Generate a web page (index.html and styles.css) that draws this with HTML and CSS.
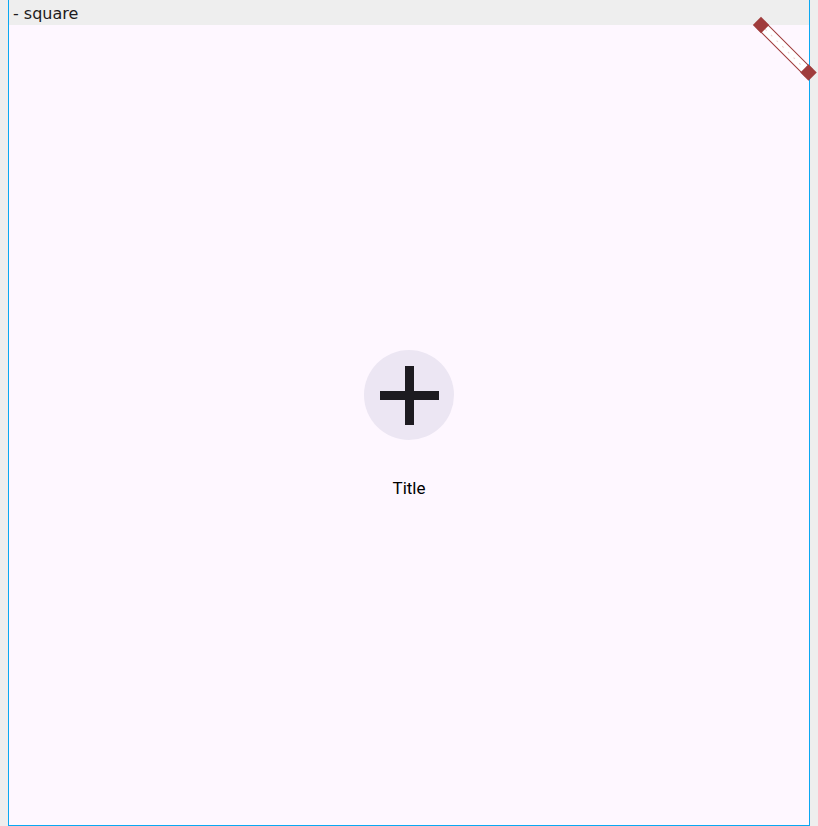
FILE: index.html
```html
<!DOCTYPE html>
<html>
<head>
<meta charset="utf-8">
<link rel="stylesheet" href="styles.css">
</head>
<body>
<div class="frame">
  <div class="header">- square</div>
  <div class="canvas">
    <div class="item">
      <div class="icon-circle">
        <svg class="plus" width="59" height="59" viewBox="0 0 59 59">
          <rect x="25" y="0" width="9" height="59" fill="#1d1b20"/>
          <rect x="0" y="25" width="59" height="9" fill="#1d1b20"/>
        </svg>
      </div>
      <div class="title">Title</div>
    </div>
  </div>
</div>
<svg class="handle" width="73" height="80" viewBox="0 0 73 80">
  <g transform="rotate(45 16 16)">
    <rect x="16" y="11" width="67.2" height="10" fill="#ffffff" stroke="#a03c3c" stroke-width="1"/>
    <line x1="22" y1="16" x2="78" y2="16" stroke="#ecd0d0" stroke-width="1" stroke-dasharray="2 6"/>
    <rect x="10.2" y="10.2" width="11.6" height="11.6" fill="#a03c3c"/>
    <rect x="77.4" y="10.2" width="11.6" height="11.6" fill="#a03c3c"/>
  </g>
</svg>
</body>
</html>
```

FILE: styles.css
```css
html, body {
  margin: 0;
  padding: 0;
}
body {
  background: #eeeeee;
  width: 818px;
  height: 826px;
  overflow: hidden;
  position: relative;
  font-family: Roboto, "Liberation Sans", sans-serif;
}
.frame {
  margin-left: 8px;
  width: 800px;
  border: 1px solid #0aa8f2;
  border-top: none;
  display: flex;
  flex-direction: column;
}
.header {
  height: 25px;
  line-height: 28px;
  overflow: hidden;
  background: #eeeeee;
  color: #1d1b20;
  font-family: "DejaVu Sans", sans-serif;
  font-size: 16px;
  padding-left: 4px;
  white-space: nowrap;
}
.canvas {
  height: 800px;
  background: #fef7ff;
  display: flex;
  align-items: center;
  justify-content: center;
}
.item {
  display: flex;
  flex-direction: column;
  align-items: center;
  gap: 36px;
}
.icon-circle {
  width: 90px;
  height: 90px;
  border-radius: 50%;
  background: #ece6f3;
  display: flex;
  align-items: center;
  justify-content: center;
}
.plus {
  display: block;
}
.title {
  font-size: 17px;
  line-height: 24px;
  color: #000000;
}
.handle {
  position: absolute;
  left: 745px;
  top: 9px;
}
```
